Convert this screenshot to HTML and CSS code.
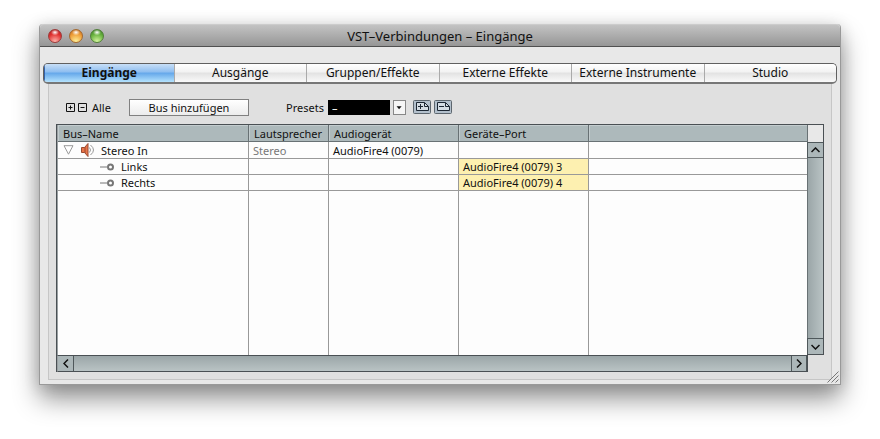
FILE: index.html
```html
<!DOCTYPE html>
<html lang="de">
<head>
<meta charset="utf-8">
<title>VST-Verbindungen – Eingänge</title>
<link rel="stylesheet" href="styles.css">
</head>
<body>
<main class="window">
  <header class="titlebar">
    <div class="lights">
      <button class="light red" aria-label="Schließen"></button>
      <button class="light amber" aria-label="Minimieren"></button>
      <button class="light green" aria-label="Zoomen"></button>
    </div>
    <h1>VST–Verbindungen – Eingänge</h1>
  </header>
  <nav class="tabs">
    <button class="tab active">Eingänge</button>
    <button class="tab">Ausgänge</button>
    <button class="tab">Gruppen/Effekte</button>
    <button class="tab">Externe Effekte</button>
    <button class="tab">Externe Instrumente</button>
    <button class="tab">Studio</button>
  </nav>
  <section class="panel">
    <div class="toolbar">
      <div class="expand">
        <button class="bare" aria-label="Alle öffnen"><svg width="10" height="10" viewBox="0 0 10 10"><path d="M.5.5h8v8h-8zM2.500 4.500h4M4.500 2.500v4" fill="none" stroke="#111"/></svg></button>
        <button class="bare" aria-label="Alle schließen"><svg width="10" height="10" viewBox="0 0 10 10"><path d="M.5.5h8v8h-8zM2.500 4.500h4" fill="none" stroke="#111"/></svg></button>
        <span>Alle</span>
      </div>
      <button class="add">Bus hinzufügen</button>
      <div class="presets">
        <label for="preset">Presets</label>
        <div class="combo">
          <select id="preset"><option>–</option></select>
          <svg class="combo-arrow" width="13" height="15" viewBox="0 0 13 15"><path d="M3 6h6L6 9.500z" fill="#111"/></svg>
        </div>
        <button class="bare store" aria-label="Preset speichern"><svg width="18" height="14" viewBox="0 0 18 14"><rect x=".5" y=".5" width="17" height="13" rx="1" fill="#b3c0cc" stroke="#5d666e"/><path d="M3.500 2.500h8l4 4v4h-12z" fill="#d5dde4" stroke="#1c2733"/><path d="M11.500 2.500v4h4M5 6.500h5M7.500 4v5" fill="none" stroke="#1c2733"/></svg></button>
        <button class="bare" aria-label="Preset löschen"><svg width="18" height="14" viewBox="0 0 18 14"><rect x=".5" y=".5" width="17" height="13" rx="1" fill="#b3c0cc" stroke="#5d666e"/><path d="M3.500 2.500h8l4 4v4h-12z" fill="#d5dde4" stroke="#1c2733"/><path d="M11.500 2.500v4h4M5 6.500h5" fill="none" stroke="#1c2733"/></svg></button>
      </div>
    </div>
    <div class="browser">
      <div class="sheet">
        <table>
          <colgroup><col class="c-name"><col class="c-speaker"><col class="c-device"><col class="c-port"><col></colgroup>
          <thead>
            <tr><th>Bus–Name</th><th>Lautsprecher</th><th>Audiogerät</th><th>Geräte–Port</th><th></th></tr>
          </thead>
          <tbody>
            <tr class="group">
              <td><div class="bus">
                <svg width="11" height="10" viewBox="0 0 11 10"><path d="M1 .7h9L5.500 9.200z" fill="#fff" stroke="#999"/></svg>
                <svg class="speaker" width="14" height="14" viewBox="0 0 14 14"><path d="M.5 4.500h3l3.500-4v13l-3.500-4h-3z" fill="#e8754a" stroke="#9a4a30"/><path d="M4 4v6" stroke="#9a4a30"/><path d="M8.500 4.500q2 2.500 0 5M9.500 2q6 5 0 10" fill="none" stroke="#999"/></svg>
                <span>Stereo In</span></div></td>
              <td class="dim">Stereo</td><td>AudioFire4 (0079)</td><td></td><td></td>
            </tr>
            <tr>
              <td><div class="bus channel"><svg width="14" height="8" viewBox="0 0 14 8"><path d="M0 4h7" stroke="#777"/><circle cx="10.500" cy="4" r="2.500" fill="#fff" stroke="#777" stroke-width="2"/></svg><span>Links</span></div></td>
              <td></td><td></td><td class="port">AudioFire4 (0079) 3</td><td></td>
            </tr>
            <tr>
              <td><div class="bus channel"><svg width="14" height="8" viewBox="0 0 14 8"><path d="M0 4h7" stroke="#777"/><circle cx="10.500" cy="4" r="2.500" fill="#fff" stroke="#777" stroke-width="2"/></svg><span>Rechts</span></div></td>
              <td></td><td></td><td class="port">AudioFire4 (0079) 4</td><td></td>
            </tr>
            <tr class="filler"><td></td><td></td><td></td><td></td><td></td></tr>
          </tbody>
        </table>
      </div>
      <div class="vscroll">
        <div class="corner"></div>
        <button class="arrow" aria-label="Nach oben"><svg width="9" height="6" viewBox="0 0 9 6"><path d="M.5 5l4-4 4 4" fill="none" stroke="#111" stroke-width="1.500"/></svg></button>
        <div class="track"></div>
        <button class="arrow" aria-label="Nach unten"><svg width="9" height="6" viewBox="0 0 9 6"><path d="M.5 1l4 4 4-4" fill="none" stroke="#111" stroke-width="1.500"/></svg></button>
      </div>
      <div class="hscroll">
        <button class="arrow" aria-label="Nach links"><svg width="6" height="9" viewBox="0 0 6 9"><path d="M5 .5l-4 4 4 4" fill="none" stroke="#111" stroke-width="1.500"/></svg></button>
        <div class="track"></div>
        <button class="arrow" aria-label="Nach rechts"><svg width="6" height="9" viewBox="0 0 6 9"><path d="M1 .5l4 4-4 4" fill="none" stroke="#111" stroke-width="1.500"/></svg></button>
      </div>
    </div>
  </section>
  <svg class="grip" width="12" height="12" viewBox="0 0 12 12"><path d="M0 12L12 0v12z" fill="#e6e6e6"/><path d="M.5 11.500l11-11M4.500 11.500l7-7M8.500 11.500l3-3" stroke="#777"/></svg>
</main>
</body>
</html>
```
FILE: styles.css
```css
* { box-sizing: border-box; }

html { height: 100%; background: #fff; }

body {
  display: flex;
  height: 100vh;
  margin: 0;
  padding: 24px 39px 54px;
  overflow: hidden;
  color: #111;
  font: 11px/16px "Lucida Grande", "Noto Sans", sans-serif;
}

button, select { font: inherit; color: inherit; margin: 0; }
svg { display: block; flex: none; }

.window {
  position: relative;
  display: flex;
  flex: 1;
  flex-direction: column;
  min-width: 0;
  border: 1px solid #999;
  border-top: 0;
  border-radius: 4px 4px 0 0;
  background: #e8e8e8;
  box-shadow: 0 14px 26px rgba(0, 0, 0, .42), 0 2px 16px rgba(0, 0, 0, .14);
}

.titlebar {
  display: grid;
  grid-template-columns: 1fr auto 1fr;
  align-items: center;
  height: 23px;
  flex: none;
  padding: 0 8px;
  border-top: 1px solid #ccc;
  border-bottom: 1px solid #505050;
  border-radius: 4px 4px 0 0;
  background: linear-gradient(#c3c3c3, #969696);
}
.titlebar h1 { grid-column: 2; margin: 0; font-size: 13px; font-weight: 400; line-height: 20px; }

.lights { display: flex; gap: 7px; }
.light {
  width: 14px;
  height: 14px;
  padding: 0;
  border: 1px solid;
  border-radius: 50%;
}
.red { border-color: #9c3a3a; background: radial-gradient(ellipse 4px 3px at 50% 20%, #fff, transparent), radial-gradient(circle at 50% 95%, #ffb4ac, #e0302f 60%, #a81d20); }
.amber { border-color: #a5692f; background: radial-gradient(ellipse 4px 3px at 50% 20%, #fff, transparent), radial-gradient(circle at 50% 95%, #fff29a, #ee9c36 60%, #b9641c); }
.green { border-color: #51803a; background: radial-gradient(ellipse 4px 3px at 50% 20%, #fff, transparent), radial-gradient(circle at 50% 95%, #d6f7a0, #65b03c 60%, #3c7a24); }

.tabs {
  display: grid;
  grid-template-columns: 130fr repeat(5, 133fr);
  flex: none;
  height: 21px;
  margin: 16px 3px 0;
  border: 1px solid #606060;
  border-bottom-width: 2px;
  border-bottom-color: #777;
  border-radius: 5px;
  overflow: hidden;
}
.tab {
  padding: 0;
  border: 0;
  border-left: 1px solid #aaa;
  background: linear-gradient(#fff, #f2f2f2 45%, #e2e2e2 50%, #fafafa);
  font-size: 12px;
  line-height: 18px;
  white-space: nowrap;
}
.tab.active {
  border-left-color: #3564ad;
  background: linear-gradient(#c8dff7, #8dbdf0 45%, #64a7ea 50%, #b4e2fd);
  font-weight: 700;
}

.panel {
  display: flex;
  flex: 1;
  flex-direction: column;
  min-height: 0;
  margin: 0 8px 4px;
  padding: 15px 7px 7px;
  border: 1px solid #c6c6c6;
  border-top: 0;
  background: #e0e0e0;
}

.toolbar { display: flex; align-items: center; height: 17px; flex: none; margin: 0 10px 8px; }
.expand { display: flex; align-items: center; gap: 2px; width: 63px; }
.expand span { margin-left: 2px; }
.bare { padding: 0; border: 0; background: none; }
.add {
  width: 120px;
  height: 17px;
  padding: 0;
  border: 1px solid #808080;
  background: linear-gradient(#fff, #ececec);
  line-height: 15px;
}
.presets { display: flex; align-items: center; gap: 3px; margin-left: 37px; }
.presets label { width: 39px; }
.combo { position: relative; }
.combo select {
  display: block;
  width: 78px;
  height: 15px;
  padding: 0 4px;
  border: 0;
  border-radius: 0;
  appearance: none;
  background: linear-gradient(90deg, #000 62px, transparent 62px);
  color: #fff;
  line-height: 14px;
}
.combo-arrow { position: absolute; top: 0; right: 0; border: 1px solid #888; background: #f6f6f6; pointer-events: none; }
.store { margin-left: 4px; }
.presets .bare { margin-bottom: 2px; }

.browser {
  display: grid;
  grid-template-columns: 1fr 17px;
  grid-template-rows: 1fr 17px;
  flex: 1;
  min-height: 0;
  border-top: 1px solid #4a5054;
  border-left: 1px solid #4a5054;
}
.sheet { min-width: 0; border-left: 1px solid #9aa0a2; background: #fdfdfd; }

table { width: 100%; height: 100%; border-collapse: separate; border-spacing: 0; table-layout: fixed; }
.c-name { width: 191px; }
.c-speaker { width: 80px; }
.c-device, .c-port { width: 130px; }
th, td {
  height: 16px;
  padding: 0 4px;
  border-right: 1px solid #999;
  border-bottom: 1px solid #999;
  line-height: 15px;
  text-align: left;
  font-weight: 400;
  white-space: nowrap;
}
th { height: 17px; padding-left: 5px; border-color: #687174; background: #adb9bb; box-shadow: inset 1px 1px #c3ccce; }
.group td { height: 17px; }
th:last-child, td:last-child { border-right: 0; }
.filler td { height: auto; border-bottom: 0; }
.dim { color: #777; }
.port { background: #fdf0b0; }
.bus { display: flex; align-items: center; height: 15px; padding-left: 1px; }
.speaker { margin: 0 6px 0 7px; }
.channel { gap: 7px; padding-left: 38px; }

.vscroll { display: flex; flex-direction: column; border-right: 1px solid #4a5054; border-bottom: 1px solid #4a5054; }
.vscroll .track { flex: 1; border-left: 1px solid #687174; background: linear-gradient(90deg, #9ba6a8, #b9c3c4); }
.corner { height: 17px; background: #e8e8e8; border-left: 1px solid #687174; }
.arrow {
  display: grid;
  place-items: center;
  padding: 0;
  border: 1px solid #4f585b;
  background: #acb7b9;
}
.vscroll .arrow { width: 16px; height: 16px; border-right: 0; }
.vscroll .arrow:last-child { border-bottom: 0; }

.hscroll { display: flex; margin-right: -1px; grid-column: 1; border: 1px solid #4a5054; border-left-color: #9aa0a2; }
.hscroll .track { flex: 1; background: linear-gradient(#9ba6a8, #b9c3c4); }
.hscroll .arrow { width: 16px; border-width: 0 1px; }
.hscroll .arrow:first-child { border-left: 0; }

.grip { position: absolute; right: 1px; bottom: 1px; }
```
